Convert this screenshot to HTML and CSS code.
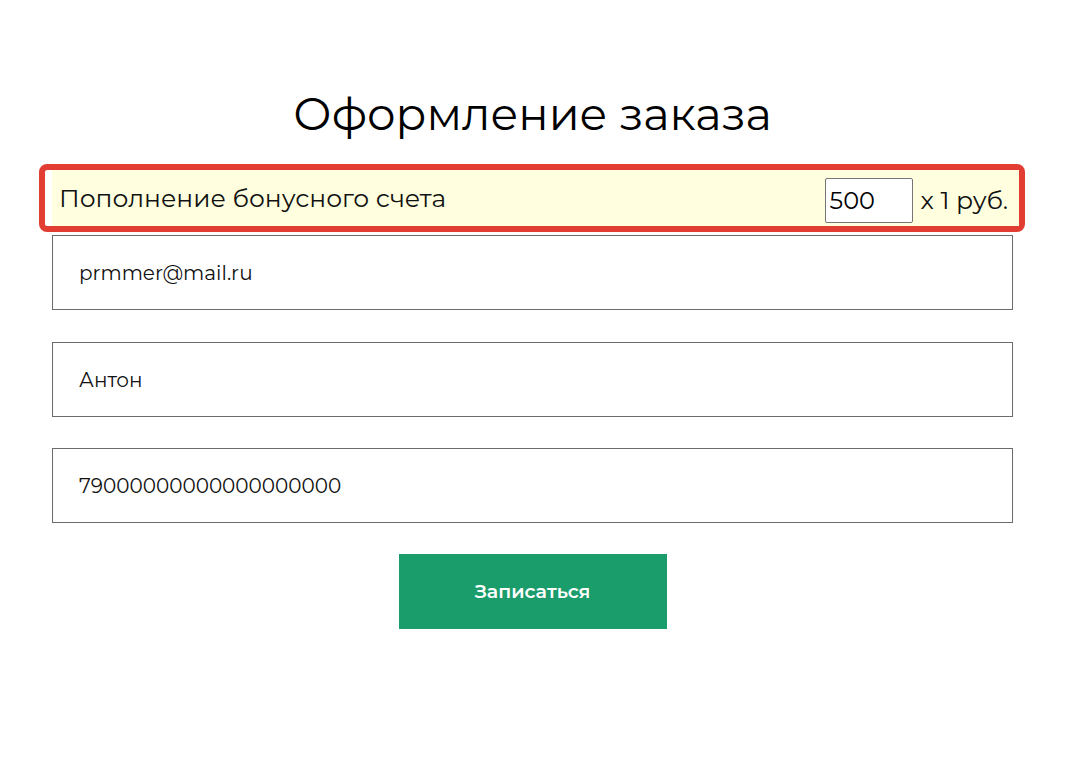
FILE: index.html
```html
<!DOCTYPE html>
<html lang="ru">
<head>
<meta charset="utf-8">
<title>Оформление заказа</title>
<link rel="stylesheet" href="styles.css">
</head>
<body>
<main class="page">
  <h1 class="title">Оформление заказа</h1>
  <div class="highlight">
    <div class="bonus-row">
      <span class="bonus-label">Пополнение бонусного счета</span>
      <div class="bonus-amount">
        <input class="qty" type="text" value="500">
        <span class="unit">x 1 руб.</span>
      </div>
    </div>
  </div>
  <form class="form">
    <input class="field field-first" type="text" value="prmmer@mail.ru">
    <input class="field" type="text" value="Антон">
    <input class="field" type="text" value="79000000000000000000">
    <button class="submit" type="button">Записаться</button>
  </form>
</main>
</body>
</html>
```
FILE: styles.css
```css
* { box-sizing: border-box; }
html, body { margin: 0; background: #fff; }
body {
  font-family: "Montserrat", "Open Sans", "Noto Sans", sans-serif;
  color: #000;
}
.page {
  width: 961px;
  margin: 0 0 0 52px;
  padding-top: 86px;
}
.title {
  margin: 0 0 22px;
  font-size: 45px;
  font-weight: 400;
  line-height: 56px;
  text-align: center;
}
.highlight {
  margin: 0 -12px 3px -13px;
  border: 6px solid #e23d32;
  border-radius: 8px;
  background: #fff;
  padding-left: 7px;
}
.bonus-row {
  height: 56px;
  background: #ffffdf;
  display: flex;
  align-items: center;
  justify-content: space-between;
  padding: 0 11px 0 7px;
}
.bonus-label {
  font-size: 25px;
  color: #111;
}
.bonus-amount {
  display: flex;
  align-items: center;
  gap: 8px;
  padding-top: 4px;
}
.qty {
  width: 88px;
  height: 45px;
  border: 1px solid #767676;
  border-radius: 2px;
  padding: 0 4px;
  font: inherit;
  font-size: 24px;
  color: #000;
  background: #fff;
}
.unit {
  font-size: 25px;
  color: #111;
}
.form {
  display: flex;
  flex-direction: column;
  align-items: center;
  gap: 31px;
}
.field {
  width: 100%;
  height: 75px;
  border: 1px solid #6b6b6b;
  padding: 0 26px;
  font: inherit;
  font-size: 20px;
  color: #111;
  background: #fff;
  outline: none;
}
.field-first {
  margin-bottom: 1px;
}
.submit {
  width: 268px;
  height: 75px;
  border: 0;
  background: #1b9c6b;
  color: #fff;
  font: inherit;
  font-size: 19px;
  font-weight: 600;
}
```
